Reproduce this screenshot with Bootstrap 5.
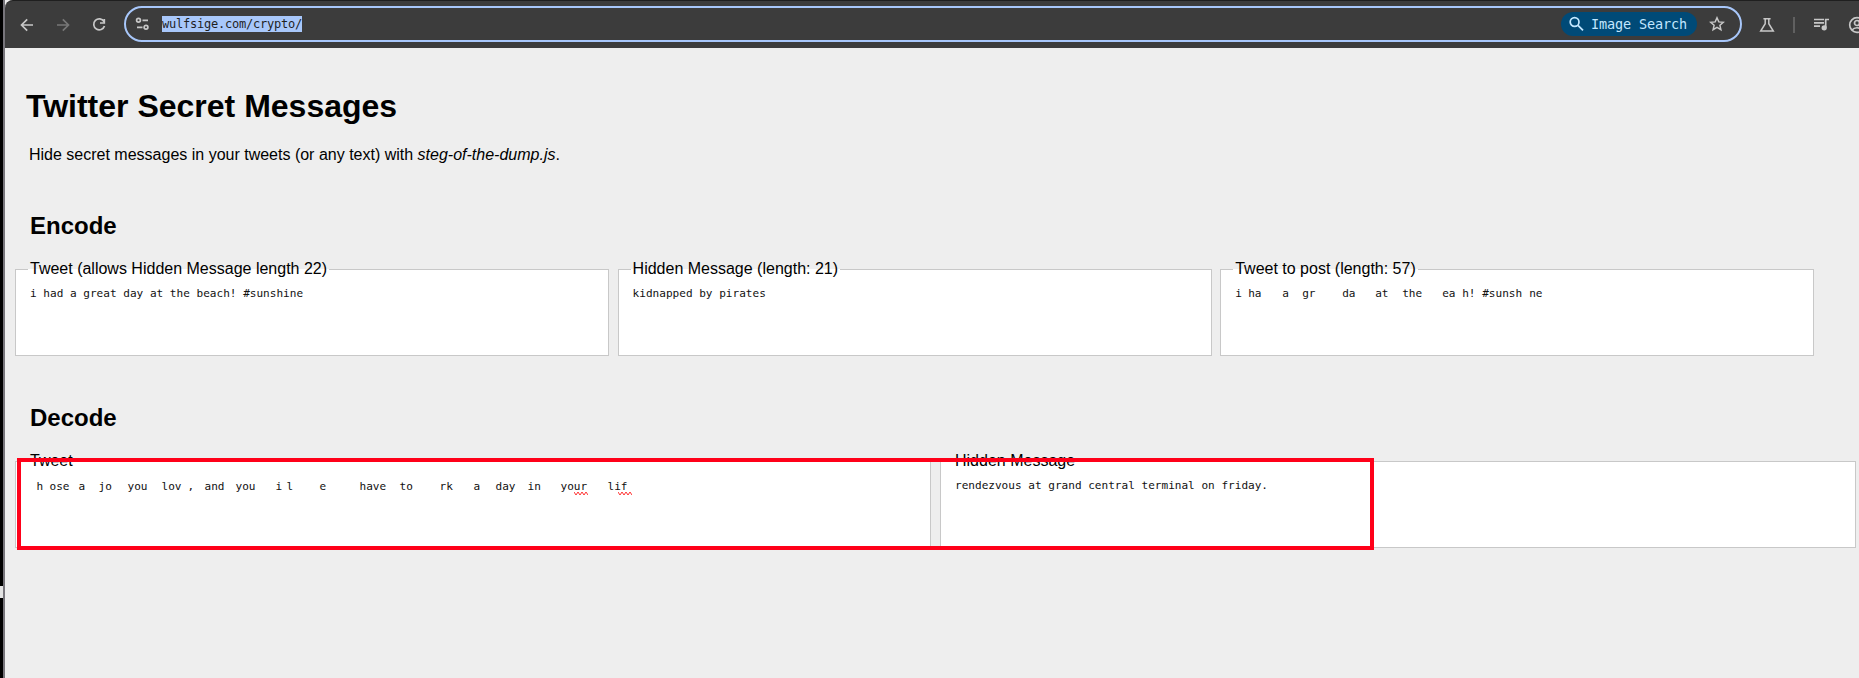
<!DOCTYPE html>
<html lang="en">
<head>
<meta charset="utf-8">
<title>Twitter Secret Messages</title>
<link href="https://cdn.jsdelivr.net/npm/bootstrap@5.3.0/dist/css/bootstrap.min.css" rel="stylesheet">
<script src="https://cdn.jsdelivr.net/npm/bootstrap@5.3.0/dist/js/bootstrap.bundle.min.js" defer></script>
<style>
body{background:#eee;color:#000;font:16px/18px "Liberation Sans",Arial,sans-serif;height:678px;overflow:hidden}
.edge{width:5px;background:#000;border-right:2px solid #77757b;padding-top:586px}
.edge i{display:block;width:3px;height:12px;background:#e4e4e4}
main{min-width:0}
.toolbar{height:48px;background:#3c3c3c;border-top:1px solid #1f1f1f;border-top-left-radius:8px;color:#c7c7c7;overflow:hidden}
.toolbar svg{display:block;flex:none;fill:none;stroke:currentColor;stroke-width:1.7}
.navset{width:119px;padding-left:14px;gap:20px}
.omnibox{width:1618px;height:36px;border:2px solid #a8c7fa;border-radius:18px;padding-left:9px;padding-right:15px;margin-top:-1px}
.url{background:#a8c7fa;color:#1f1f1f;font:12px/16px "DejaVu Sans Mono",monospace;letter-spacing:-.224px;margin-left:12px;width:140px;white-space:nowrap}
.chip{background:#004a77;color:#c2e7ff;border-radius:12px;height:24px;width:136px;padding-left:7px;font:13.5px/24px "DejaVu Sans Mono",monospace;letter-spacing:-.128px;white-space:nowrap}
.divider{width:2px;height:16px;background:#606060;margin-left:18px;flex:none}
h1{font-size:32px;line-height:36px;font-weight:700;margin:40px 0 0 21px}
.intro{margin:22px 0 0 24px}
h2{font-size:24px;line-height:28px;font-weight:700}
.enc,.dec{margin:48px 0 0 25px}
fieldset{box-sizing:border-box;border:1px solid #c8c8c8;background:#fff;height:96px;padding:0 12px;flex:none}
legend{float:none;width:auto;font-size:16px;line-height:18px;margin:0;padding:0 2px}
.fields{margin:20px 0 0 10px}
.typed{font:11.07px/16px "DejaVu Sans Mono",monospace;white-space:pre;padding:8px 0 0 2px;color:#111}
.typed span{display:inline-block}
.three fieldset{width:594px}
.three{gap:8.6px}
.two{gap:9px}
.two fieldset{width:916px}
.frame{position:absolute;left:17px;top:458px;width:1357px;height:92px;border:4px solid #ff0019}
.sq{position:relative}
.sq svg{position:absolute;top:12px;fill:none;stroke:#f33;stroke-width:1}
</style>
</head>
<body>
<div class="d-flex h-100">
<div class="edge flex-shrink-0"><i></i></div>
<main class="flex-grow-1">
<div class="toolbar d-flex align-items-center">
  <div class="navset d-flex flex-shrink-0">
    <svg width="16" height="16" viewBox="0 0 16 16"><path d="M14 8H3M8.2 2.3 2.5 8l5.7 5.7"/></svg>
    <svg width="16" height="16" viewBox="0 0 16 16" style="color:#777"><path d="M2 8h11M7.8 2.3 13.5 8l-5.7 5.7"/></svg>
    <svg width="16" height="16" viewBox="0 0 16 16"><path d="M13 4.6A5.5 5.5 0 1 0 13.5 9M13.3 2v4H9"/></svg>
  </div>
  <div class="omnibox d-flex align-items-center flex-shrink-0">
    <svg width="15" height="14" viewBox="0 0 15 14"><circle cx="3.5" cy="3.3" r="1.9"/><path d="M7.5 3.3H13M2 10.3h5.5"/><circle cx="11" cy="10.3" r="1.9"/></svg>
    <div class="url">wulfsige.com/crypto/</div>
    <div class="chip d-flex align-items-center ms-auto"><svg width="17" height="17" viewBox="0 0 17 17"><circle cx="6.6" cy="6" r="4.4"/><path d="m10 9.4 5 5"/></svg><span style="margin-left:6px">Image Search</span></div>
    <svg width="16" height="16" viewBox="0 0 16 16" style="margin-left:12px;stroke-width:1.5"><path d="m8 1.8 1.8 4.1 4.5.4-3.4 3 1 4.4L8 11.4l-3.9 2.3 1-4.4-3.4-3 4.5-.4z"/></svg>
  </div>
  <svg width="16" height="16" viewBox="0 0 16 16" style="margin-left:17px;stroke-width:1.5"><path d="M4.4 1.7h7.2M6.2 1.7v5L1.7 14h12.6L9.8 6.7v-5"/></svg>
  <span class="divider"></span>
  <svg width="17" height="15" viewBox="0 0 17 15" style="margin-left:18px"><path d="M1 2.5h10M1 5.8h10M1 9.1h6M16 2.5h-3.3v8"/><circle cx="11.2" cy="10.8" r="1.8" fill="currentColor"/></svg>
  <svg width="18" height="18" viewBox="0 0 18 18" style="margin-left:18px"><circle cx="9" cy="9" r="7.3"/><circle cx="9" cy="7" r="2.5"/><path d="M4 14c2.5-3 7.5-3 10 0"/></svg>
</div>
<h1>Twitter Secret Messages</h1>
<p class="intro mb-0">Hide secret messages in your tweets (or any text) with <em>steg-of-the-dump.js</em>.</p>
<h2 class="enc">Encode</h2>
<div class="fields three d-flex">
  <fieldset><legend>Tweet (allows Hidden Message length 22)</legend><div class="typed">i had a great day at the beach! #sunshine</div></fieldset>
  <fieldset><legend>Hidden Message (length: 21)</legend><div class="typed">kidnapped by pirates</div></fieldset>
  <fieldset><legend>Tweet to post (length: 57)</legend><div class="typed"><span style="width:13px">i </span><span style="width:34px">ha </span><span style="width:20px">a </span><span style="width:40px">gr </span><span style="width:33px">da </span><span style="width:27px">at </span><span style="width:40px">the </span><span style="width:20px">ea </span><span style="width:20px">h! </span><span style="width:47px">#sunsh </span><span>ne</span></div></fieldset>
</div>
<h2 class="dec">Decode</h2>
<div class="fields two d-flex">
  <fieldset><legend>Tweet</legend><div class="typed" style="padding-left:8.5px;padding-top:9px"><span style="width:13px">h </span><span style="width:29px">ose </span><span style="width:20px">a </span><span style="width:29px">jo </span><span style="width:34px">you </span><span style="width:26px">lov </span><span style="width:17px">, </span><span style="width:31px">and </span><span style="width:40px">you </span><span style="width:11px">i </span><span style="width:33px">l </span><span style="width:40px">e </span><span style="width:40px">have </span><span style="width:40px">to </span><span style="width:34px">rk </span><span style="width:22px">a </span><span style="width:32px">day </span><span style="width:33px">in </span><span class="sq" style="width:47px">your <svg style="left:13px" width="14" height="5"><path d="M0 1l2 3 2-3 2 3 2-3 2 3 2-3 2 3"/></svg></span><span class="sq">lif<svg style="left:10px" width="14" height="5"><path d="M0 1l2 3 2-3 2 3 2-3 2 3 2-3 2 3"/></svg></span></div></fieldset>
  <fieldset><legend>Hidden Message</legend><div class="typed">rendezvous at grand central terminal on friday.</div></fieldset>
</div>
</main>
</div>
<div class="frame"></div>
</body>
</html>
